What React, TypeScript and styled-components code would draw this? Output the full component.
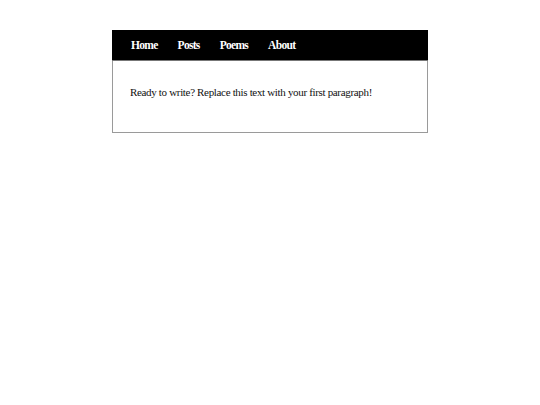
import React from 'react';
import styled, { createGlobalStyle } from 'styled-components';

const GlobalStyle = createGlobalStyle`
  html, body {
    margin: 0;
    padding: 0;
    background: #ffffff;
  }
  body {
    font-family: "Liberation Serif", "Times New Roman", serif;
  }
`;

const Page = styled.div`
  display: flex;
  justify-content: center;
  padding-top: 30px;
`;

const Frame = styled.div`
  width: 314px;
  border: 1px solid #9a9a9a;
  border-top: none;
  background: #fff;
`;

const NavBar = styled.nav`
  display: flex;
  align-items: center;
  gap: 20px;
  height: 31px;
  padding: 0 19px;
  box-sizing: border-box;
  background: #000;
  border-bottom: 1px solid #777;
  margin: 0 -1px;
`;

const NavLink = styled.a`
  color: #fff;
  font-weight: bold;
  font-size: 11.5px;
  letter-spacing: -0.7px;
  word-spacing: 0;
  text-decoration: none;
`;

const Content = styled.main`
  height: 71px;
  box-sizing: border-box;
  padding: 25px 17px 0;
`;

const Paragraph = styled.p`
  margin: 0;
  font-size: 11px;
  letter-spacing: -0.33px;
  color: #111;
`;

const App: React.FC = () => {
  const links = ['Home', 'Posts', 'Poems', 'About'];
  return (
    <>
      <GlobalStyle />
      <Page>
        <Frame>
          <NavBar>
            {links.map((l) => (
              <NavLink key={l} href="#">
                {l}
              </NavLink>
            ))}
          </NavBar>
          <Content>
            <Paragraph>Ready to write? Replace this text with your first paragraph!</Paragraph>
          </Content>
        </Frame>
      </Page>
    </>
  );
};

export default App;
